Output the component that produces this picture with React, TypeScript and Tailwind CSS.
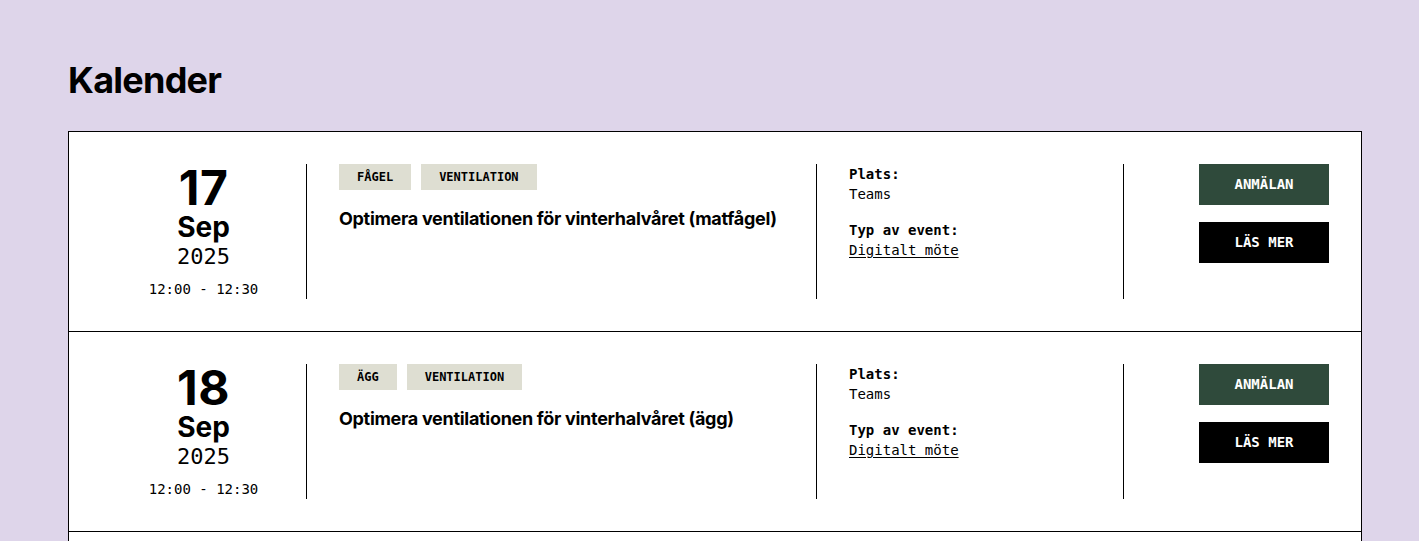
import React from "react";

type Ev = {
  day: string;
  month: string;
  year: string;
  time: string;
  tags: string[];
  title: string;
  place: string;
  type: string;
};

const events: Ev[] = [
  {
    day: "17",
    month: "Sep",
    year: "2025",
    time: "12:00 - 12:30",
    tags: ["FÅGEL", "VENTILATION"],
    title: "Optimera ventilationen för vinterhalvåret (matfågel)",
    place: "Teams",
    type: "Digitalt möte",
  },
  {
    day: "18",
    month: "Sep",
    year: "2025",
    time: "12:00 - 12:30",
    tags: ["ÄGG", "VENTILATION"],
    title: "Optimera ventilationen för vinterhalvåret (ägg)",
    place: "Teams",
    type: "Digitalt möte",
  },
  {
    day: "24",
    month: "Sep",
    year: "2025",
    time: "12:00 - 12:30",
    tags: ["GRIS"],
    title: "Smittskydd i praktiken",
    place: "Teams",
    type: "Digitalt möte",
  },
];

const sans = "font-['Inter','Noto_Sans',sans-serif]";
const mono = "font-['DejaVu_Sans_Mono','Liberation_Mono',monospace]";

function Row({ ev }: { ev: Ev }) {
  return (
    <li className="grid grid-cols-[238px_510px_307px_237px] border-b border-black py-8">
      <div className="flex flex-col items-center border-r border-black pl-8 text-black">
        <div className={`${sans} text-[48px] font-bold leading-[48px] tracking-[0.5px]`}>{ev.day}</div>
        <div className={`${sans} text-[28px] font-bold leading-[30px]`}>{ev.month}</div>
        <div className={`${mono} text-[22px] leading-[30px]`}>{ev.year}</div>
        <div className={`${mono} mt-[7px] text-[14px] leading-[20px]`}>{ev.time}</div>
      </div>
      <div className="border-r border-black px-8">
        <div className="flex gap-[10px]">
          {ev.tags.map((t) => (
            <span
              key={t}
              className={`${mono} flex h-[26px] items-center bg-[#deded2] px-[18px] text-[12px] font-bold text-black`}
            >
              {t}
            </span>
          ))}
        </div>
        <h2 className={`${sans} mt-[15px] text-[18px] font-bold leading-7 tracking-[-0.3px] text-black`}>
          {ev.title}
        </h2>
      </div>
      <div className={`${mono} border-r border-black px-8 text-[14px] leading-5 text-black`}>
        <div className="font-bold">Plats:</div>
        <div>{ev.place}</div>
        <div className="mt-4 font-bold">Typ av event:</div>
        <a href="#" className="underline underline-offset-2">
          {ev.type}
        </a>
      </div>
      <div className="flex flex-col items-end gap-[17px] pr-8">
        <button
          className={`${mono} flex h-[41px] w-[130px] items-center justify-center bg-[#2f4a3b] text-[14px] font-bold text-white`}
        >
          ANMÄLAN
        </button>
        <button
          className={`${mono} flex h-[41px] w-[130px] items-center justify-center bg-black text-[14px] font-bold text-white`}
        >
          LÄS MER
        </button>
      </div>
    </li>
  );
}

export default function App() {
  return (
    <div className="min-h-screen bg-[#ded5ea] pt-[60px] pb-10">
      <div className="ml-[68px] w-[1294px]">
        <h1 className={`${sans} text-[36px] font-bold leading-[40px] tracking-[-0.75px] text-black`}>Kalender</h1>
        <ul className="mt-[31px] border-x border-t border-black bg-white">
          {events.map((ev) => (
            <Row key={ev.day} ev={ev} />
          ))}
        </ul>
      </div>
    </div>
  );
}
